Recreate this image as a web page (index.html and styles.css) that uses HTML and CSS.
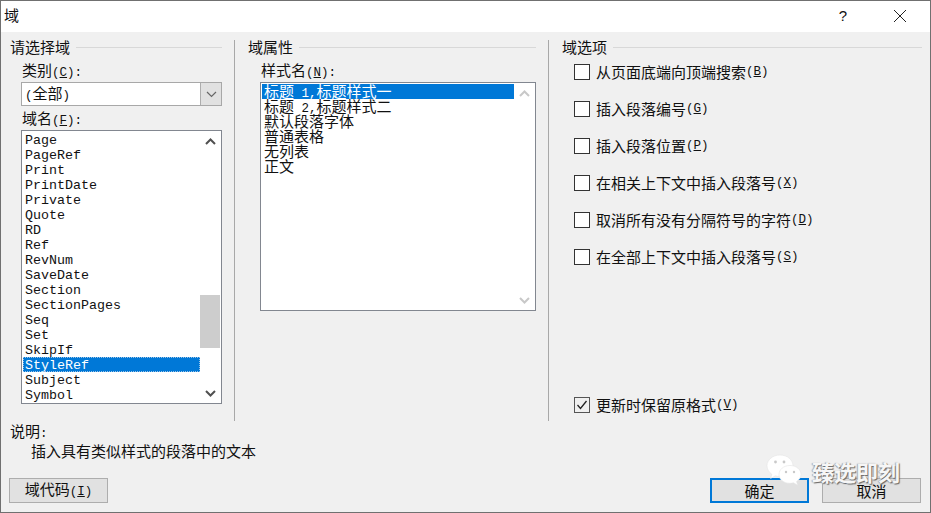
FILE: index.html
```html
<!DOCTYPE html>
<html lang="zh-CN">
<head>
<meta charset="utf-8">
<title>域</title>
<link rel="stylesheet" href="styles.css">
</head>
<body>
<div class="dialog">
  <header class="titlebar">
    <span class="title">域</span>
    <span class="help">?</span>
    <svg class="close" width="14" height="14" viewBox="0 0 14 14"><path d="M1 1L13 13M13 1L1 13" stroke="#222" stroke-width="1" fill="none"/></svg>
  </header>

  <main class="panes">
    <section class="pane">
      <div class="group-head"><span>请选择域</span><i class="rule"></i></div>
      <div class="indent">
        <div class="label first">类别<span class="lat">(<u>C</u>):</span></div>
        <div class="combo">
          <span class="combo-value"><span class="lat">(</span>全部<span class="lat">)</span></span>
          <span class="combo-btn"><svg width="11" height="7" viewBox="0 0 11 7"><path d="M1 1L5.5 5.5L10 1" stroke="#666" stroke-width="1.2" fill="none"/></svg></span>
        </div>
        <div class="label second">域名<span class="lat">(<u>F</u>):</span></div>
        <div class="listbox names">
          <ul class="items mono">
            <li>Page</li><li>PageRef</li><li>Print</li><li>PrintDate</li><li>Private</li><li>Quote</li><li>RD</li><li>Ref</li><li>RevNum</li><li>SaveDate</li><li>Section</li><li>SectionPages</li><li>Seq</li><li>Set</li><li>SkipIf</li><li class="sel focus">StyleRef</li><li>Subject</li><li>Symbol</li>
          </ul>
          <div class="scrollbar">
            <span class="arrow"><svg width="11" height="7" viewBox="0 0 11 7"><path d="M1 6L5.5 1.5L10 6" stroke="#505050" stroke-width="2" fill="none"/></svg></span>
            <div class="track"><div class="thumb"></div></div>
            <span class="arrow"><svg width="11" height="7" viewBox="0 0 11 7"><path d="M1 1L5.5 5.5L10 1" stroke="#505050" stroke-width="2" fill="none"/></svg></span>
          </div>
        </div>
      </div>
    </section>

    <div class="divider"></div>

    <section class="pane">
      <div class="group-head"><span>域属性</span><i class="rule"></i></div>
      <div class="indent">
        <div class="label first">样式名<span class="lat">(<u>N</u>):</span></div>
        <div class="listbox styles">
          <ul class="items">
            <li class="sel">标题<span class="lat"> 1,</span>标题样式一</li>
            <li>标题<span class="lat"> 2,</span>标题样式二</li>
            <li>默认段落字体</li>
            <li>普通表格</li>
            <li>无列表</li>
            <li>正文</li>
          </ul>
          <div class="scrollbar">
            <span class="arrow"><svg width="11" height="7" viewBox="0 0 11 7"><path d="M1 6L5.5 1.5L10 6" stroke="#c8c8c8" stroke-width="2" fill="none"/></svg></span>
            <span class="arrow"><svg width="11" height="7" viewBox="0 0 11 7"><path d="M1 1L5.5 5.5L10 1" stroke="#c8c8c8" stroke-width="2" fill="none"/></svg></span>
          </div>
        </div>
      </div>
    </section>

    <div class="divider"></div>

    <section class="pane options">
      <div class="group-head"><span>域选项</span><i class="rule"></i></div>
      <div class="checks">
        <label class="check"><span class="box"></span>从页面底端向顶端搜索<span class="lat">(<u>B</u>)</span></label>
        <label class="check"><span class="box"></span>插入段落编号<span class="lat">(<u>G</u>)</span></label>
        <label class="check"><span class="box"></span>插入段落位置<span class="lat">(<u>P</u>)</span></label>
        <label class="check"><span class="box"></span>在相关上下文中插入段落号<span class="lat">(<u>X</u>)</span></label>
        <label class="check"><span class="box"></span>取消所有没有分隔符号的字符<span class="lat">(<u>D</u>)</span></label>
        <label class="check"><span class="box"></span>在全部上下文中插入段落号<span class="lat">(<u>S</u>)</span></label>
      </div>
      <label class="check keep"><span class="box"><svg width="14" height="14" viewBox="0 0 14 14"><path d="M2.5 7L5.5 10.5L11.5 3" stroke="#222" stroke-width="1.3" fill="none"/></svg></span>更新时保留原格式<span class="lat">(<u>V</u>)</span></label>
    </section>
  </main>

  <section class="desc">
    <div>说明<span class="lat">:</span></div>
    <div class="desc-text">插入具有类似样式的段落中的文本</div>
  </section>

  <footer class="actions">
    <button class="btn">域代码<span class="lat">(<u>I</u>)</span></button>
    <div class="actions-right">
      <button class="btn primary">确定</button>
      <button class="btn">取消</button>
    </div>
  </footer>

  <div class="watermark">
    <svg width="36" height="34" viewBox="0 0 36 34">
      <path d="M14 1C6.8 1 1 5.8 1 11.8C1 15.2 2.9 18.2 5.8 20.2L4.6 24.4L9.4 21.8C10.9 22.3 12.4 22.5 14 22.5C21.2 22.5 27 17.7 27 11.8C27 5.8 21.2 1 14 1Z" fill="#fff" stroke="#e4e4e4" stroke-width=".6"/>
      <path d="M24 11.5C17.6 11.5 13 15.6 13 20.4C13 25.2 17.6 29.3 24 29.3C25.2 29.3 26.4 29.1 27.5 28.8L31.6 31.2L30.6 27.4C33.3 25.7 35 23.2 35 20.4C35 15.6 30.4 11.5 24 11.5Z" fill="#fff" stroke="#e4e4e4" stroke-width=".6"/>
      <circle cx="9.5" cy="8" r="1.4" fill="#c9c9c9"/><circle cx="18" cy="8" r="1.4" fill="#c9c9c9"/>
      <circle cx="20" cy="18" r="1.2" fill="#c9c9c9"/><circle cx="28" cy="18" r="1.2" fill="#c9c9c9"/>
    </svg>
    <span class="wm-text">臻选即刻</span>
  </div>
</div>
</body>
</html>
```

FILE: styles.css
```css
* { box-sizing: border-box; }
html, body { margin: 0; padding: 0; }
body {
  width: 931px;
  height: 513px;
  overflow: hidden;
  font-family: "Noto Sans CJK SC", "Liberation Mono", sans-serif;
  font-size: 15px;
  line-height: 16px;
  color: #111;
}
ul { list-style: none; margin: 0; padding: 0; }

.dialog {
  position: relative;
  width: 931px;
  height: 513px;
  display: flex;
  flex-direction: column;
  background: #f0f0f0;
  border: 1px solid #707070;
}

.titlebar {
  height: 31px;
  flex: none;
  display: flex;
  align-items: center;
  background: #fff;
  padding-left: 3px;
}
.title { flex: 1; padding-bottom: 4px; }
.help { font-family: "Liberation Sans", sans-serif; font-size: 15px; margin-right: 46px; padding-bottom: 2px; }
.close { margin-right: 23px; margin-bottom: 1px; }

.lat {
  font-family: "Liberation Mono", monospace;
  font-size: 12.5px;
  white-space: pre;
}

.panes {
  flex: none;
  height: 389px;
  display: grid;
  grid-template-columns: 212px 1px 289px 1px 361px;
  column-gap: 12px;
  padding: 7px 0 8px 9px;
}
.pane { min-width: 0; }
.pane + .divider + .pane { padding-left: 1px; }
.divider {
  background: #a8a8a8;
  margin: 1px 0 -8px;
}
.options { display: flex; flex-direction: column; }

.group-head { display: flex; align-items: center; height: 16px; }
.rule { flex: 1; height: 1px; background: #d8d8d8; margin-left: 6px; }

.indent { padding-left: 11px; }
.pane + .divider + .pane .indent { padding-left: 12px; }

.label { height: 16px; line-height: 14px; padding-left: 1px; }
.label.first { margin-top: 8px; }
.label.second { margin-top: 5px; }

.combo {
  margin-top: 3px;
  height: 24px;
  display: flex;
  background: #fff;
  border: 1px solid #a8a8a8;
}
.combo-value { flex: 1; padding-left: 3px; line-height: 20px; }
.combo-btn {
  width: 21px;
  display: flex;
  align-items: center;
  justify-content: center;
  background: #e1e1e1;
  border-left: 1px solid #adadad;
}

.listbox {
  margin-top: 3px;
  display: flex;
  background: #fff;
  border: 1px solid #828790;
  padding: 0 1px;
}
.names { height: 274px; }
.styles { height: 229px; }

.items { flex: 1; min-width: 0; padding-top: 1px; }
.items li { height: 15px; line-height: 13px; padding-left: 2px; white-space: nowrap; }
.items.mono { font-family: "Liberation Mono", monospace; font-size: 13.33px; }
.items.mono li { line-height: 17px; }
.items .sel { background: #0078d7; color: #fff; }
.items .focus { outline: 1px dotted #9cc4e6; outline-offset: -1px; }

.scrollbar {
  width: 20px;
  flex: none;
  display: flex;
  flex-direction: column;
  justify-content: space-between;
}
.arrow { height: 20px; display: flex; align-items: center; justify-content: center; }
.track { flex: 1; }
.thumb { width: 20px; height: 53px; margin-top: 144px; background: #cdcdcd; }

.checks { display: flex; flex-direction: column; gap: 21px; margin-top: 9px; }
.check { display: flex; align-items: center; height: 16px; padding-left: 12px; }
.box {
  width: 16px;
  height: 16px;
  margin-right: 6px;
  flex: none;
  background: #fff;
  border: 1px solid #333;
  display: flex;
  align-items: center;
  justify-content: center;
}
.keep { margin-top: auto; }
.keep .box { background: #f0f0f0; border-color: #555; }

.desc { flex: none; padding: 2px 0 0 9px; height: 57px; }
.desc-text { margin-top: 1px; padding-left: 21px; }

.actions {
  flex: none;
  display: flex;
  justify-content: space-between;
  padding: 0 9px 0 8px;
}
.actions-right { display: flex; gap: 13px; }
.btn {
  width: 99px;
  height: 25px;
  padding: 0;
  font: inherit;
  color: #111;
  background: #e1e1e1;
  border: 1px solid #adadad;
}
.primary { border: 2px solid #0078d7; }

.watermark {
  position: absolute;
  left: 765px;
  top: 453px;
  display: flex;
  align-items: center;
  gap: 10px;
}
.wm-text {
  font-size: 22px;
  line-height: 30px;
  font-weight: 700;
  color: #f6f6f6;
  text-shadow: 1px 1px 1px #666, -1px 0 1px #aaa;
}
```
